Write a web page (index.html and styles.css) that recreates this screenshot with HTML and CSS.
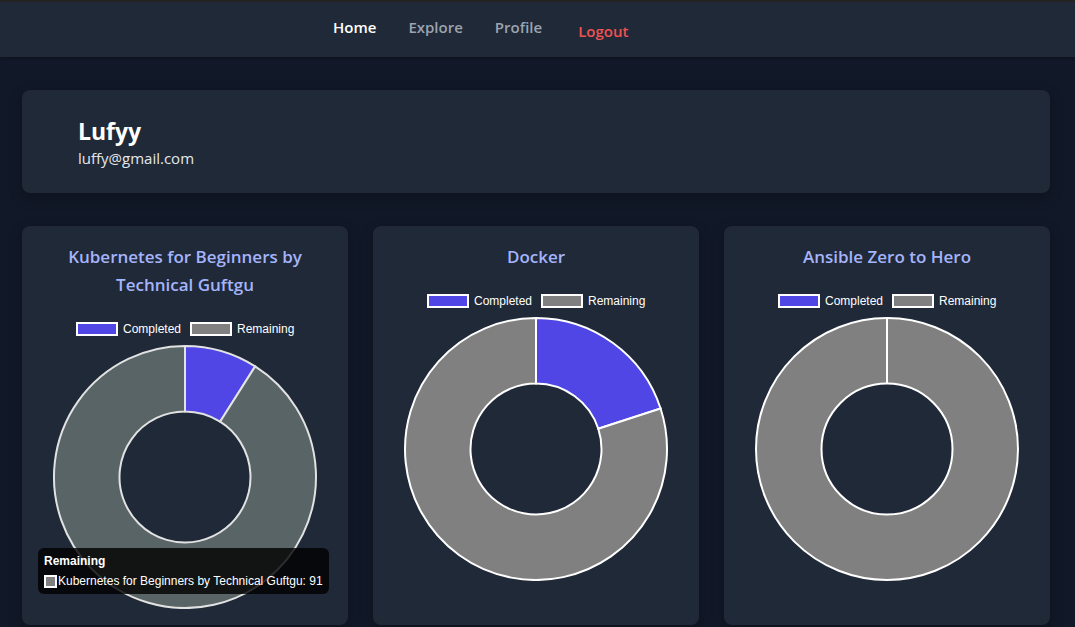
FILE: index.html
```html
<!DOCTYPE html>
<html lang="en">
<head>
<meta charset="utf-8">
<title>Dashboard</title>
<link rel="stylesheet" href="styles.css">
</head>
<body>
<nav class="nav">
  <a class="nav-link active" href="#">Home</a>
  <a class="nav-link" href="#">Explore</a>
  <a class="nav-link" href="#">Profile</a>
  <button class="nav-logout">Logout</button>
</nav>
<main class="main">
  <section class="profile">
    <h1 class="profile-name">Lufyy</h1>
    <p class="profile-email">luffy@gmail.com</p>
  </section>
  <section class="courses">
    <article class="course">
      <h2 class="course-title">Kubernetes for Beginners by Technical Guftgu</h2>
      <svg class="chart" width="326" height="300" viewBox="0 0 326 300">
        <rect x="55" y="14" width="40" height="12" fill="#4f46e5" stroke="#fff" stroke-width="2"/>
        <text x="101" y="24" class="legend">Completed</text>
        <rect x="169" y="14" width="40" height="12" fill="#808080" stroke="#fff" stroke-width="2"/>
        <text x="215" y="24" class="legend">Remaining</text>
        <path d="M163 37 A131 131 0 0 1 233.19 57.40 L198.09 112.70 A65.5 65.5 0 0 0 163 102.5 Z" fill="#4f46e5" stroke="#e2e2e2" stroke-width="2"/>
        <path d="M233.19 57.40 A131 131 0 1 1 163 37 L163 102.5 A65.5 65.5 0 1 0 198.09 112.70 Z" fill="#596466" stroke="#e2e2e2" stroke-width="2"/>
      </svg>
      <div class="tooltip">
        <div class="tooltip-title">Remaining</div>
        <div class="tooltip-row"><span class="tooltip-swatch"></span>Kubernetes for Beginners by Technical Guftgu: 91</div>
      </div>
    </article>
    <article class="course">
      <h2 class="course-title">Docker</h2>
      <svg class="chart" width="326" height="300" viewBox="0 0 326 300">
        <rect x="55" y="14" width="40" height="12" fill="#4f46e5" stroke="#fff" stroke-width="2"/>
        <text x="101" y="24" class="legend">Completed</text>
        <rect x="169" y="14" width="40" height="12" fill="#808080" stroke="#fff" stroke-width="2"/>
        <text x="215" y="24" class="legend">Remaining</text>
        <path d="M163 37 A131 131 0 0 1 287.59 127.52 L225.29 147.76 A65.5 65.5 0 0 0 163 102.5 Z" fill="#4f46e5" stroke="#fff" stroke-width="2"/>
        <path d="M287.59 127.52 A131 131 0 1 1 163 37 L163 102.5 A65.5 65.5 0 1 0 225.29 147.76 Z" fill="#808080" stroke="#fff" stroke-width="2"/>
      </svg>
    </article>
    <article class="course">
      <h2 class="course-title">Ansible Zero to Hero</h2>
      <svg class="chart" width="326" height="300" viewBox="0 0 326 300">
        <rect x="55" y="14" width="40" height="12" fill="#4f46e5" stroke="#fff" stroke-width="2"/>
        <text x="101" y="24" class="legend">Completed</text>
        <rect x="169" y="14" width="40" height="12" fill="#808080" stroke="#fff" stroke-width="2"/>
        <text x="215" y="24" class="legend">Remaining</text>
        <circle cx="163" cy="168" r="131" fill="#808080" stroke="#fff" stroke-width="2"/>
        <circle cx="163" cy="168" r="65.5" fill="#1f2937" stroke="#fff" stroke-width="2"/>
        <line x1="163" y1="37" x2="163" y2="102.5" stroke="#fff" stroke-width="2"/>
      </svg>
    </article>
  </section>
</main>
</body>
</html>
```

FILE: styles.css
```css
* { box-sizing: border-box; }
html, body { margin: 0; padding: 0; }
body {
  background: #111827;
  font-family: "Open Sans", "Noto Sans", sans-serif;
  color: #fff;
  height: 627px;
  overflow: hidden;
}
.nav {
  height: 57px;
  background: #1f2937;
  border-top: 2px solid #232323;
  display: flex;
  align-items: center;
  padding-left: 333px;
  gap: 32px;
  box-shadow: 0 1px 3px rgba(0,0,0,0.3);
}
.nav-link {
  font-size: 15px;
  font-weight: 600;
  color: #9ca3af;
  text-decoration: none;
  margin-top: -5px;
}
.nav-link.active { color: #fff; }
.nav-logout {
  background: none;
  border: 0;
  padding: 0;
  margin-left: 4px;
  margin-top: 3px;
  font-family: inherit;
  font-size: 15px;
  font-weight: 600;
  color: #f05252;
}
.main {
  padding: 33px 25px 0 22px;
}
.profile {
  background: #1f2937;
  border-radius: 8px;
  height: 103px;
  padding: 26px 56px;
  box-shadow: 0 4px 14px rgba(0,0,0,0.25);
}
.profile-name {
  margin: 0;
  font-size: 23px;
  line-height: 30px;
  font-weight: 700;
}
.profile-email {
  margin: 2px 0 0;
  font-size: 15px;
  line-height: 20px;
  color: #e5e7eb;
}
.courses {
  margin-top: 33px;
  display: grid;
  grid-template-columns: repeat(3, 326px);
  gap: 25px;
}
.course {
  position: relative;
  background: #1f2937;
  border-radius: 8px;
  padding: 17px 0 16px;
  box-shadow: 0 4px 14px rgba(0,0,0,0.25);
}
.course-title {
  margin: 0;
  padding: 0 18px;
  text-align: center;
  font-size: 17px;
  line-height: 28px;
  font-weight: 600;
  color: #a5b4fc;
}
.chart {
  display: block;
  margin-top: 10px;
}
.legend {
  font-family: "Liberation Sans", Arial, sans-serif;
  font-size: 12px;
  fill: #fff;
}
.tooltip {
  position: absolute;
  left: 16px;
  top: 322px;
  width: 291px;
  height: 46px;
  background: rgba(0,0,0,0.8);
  border-radius: 6px;
  padding: 6px 6px;
  font-family: "Liberation Sans", Arial, sans-serif;
  font-size: 12px;
  color: #fff;
  white-space: nowrap;
}
.tooltip-title {
  font-weight: 700;
  line-height: 14px;
  margin-bottom: 6px;
}
.tooltip-row {
  display: flex;
  align-items: center;
  line-height: 14px;
}
.tooltip-swatch {
  flex-shrink: 0;
  width: 13px;
  height: 13px;
  background: #808080;
  border: 2px solid #fff;
  margin-right: 1px;
}
```
